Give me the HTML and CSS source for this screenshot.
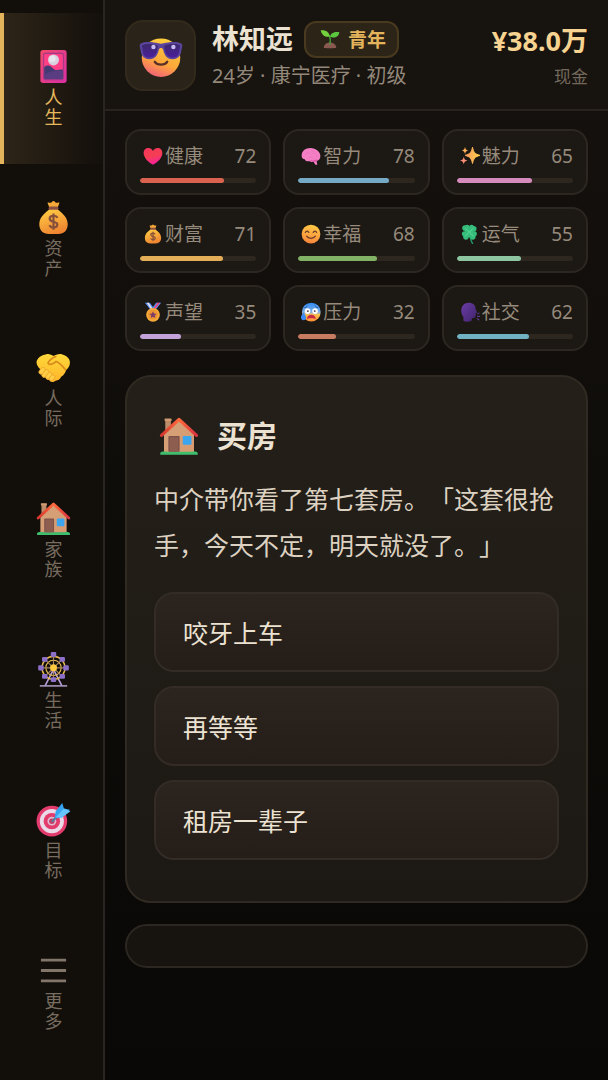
FILE: index.html
```html
<!DOCTYPE html>
<html lang="zh-CN">
<head>
  <meta charset="UTF-8">
  <meta name="viewport" content="width=device-width, initial-scale=1.0">
  <title>人生</title>
  <link rel="stylesheet" href="styles.css">
</head>
<body>
  <svg class="sprite" width="0" height="0" aria-hidden="true">
    <defs>
      <linearGradient id="gFace" x1="0.7" y1="0" x2="0.3" y2="1">
        <stop offset="0" stop-color="#ffd23e"/>
        <stop offset="0.6" stop-color="#ffa83a"/>
        <stop offset="1" stop-color="#f0607a"/>
      </linearGradient>
      <linearGradient id="gSmile" x1="0.6" y1="0" x2="0.4" y2="1">
        <stop offset="0" stop-color="#ffcb45"/>
        <stop offset="1" stop-color="#f8863c"/>
      </linearGradient>
      <linearGradient id="gBag" x1="0.2" y1="0" x2="0.6" y2="1">
        <stop offset="0" stop-color="#ffcf45"/>
        <stop offset="1" stop-color="#ee8230"/>
      </linearGradient>
      <linearGradient id="gHand" x1="0" y1="0" x2="0" y2="1">
        <stop offset="0" stop-color="#ffd83a"/>
        <stop offset="1" stop-color="#ffb52a"/>
      </linearGradient>
      <linearGradient id="gWall" x1="0" y1="0" x2="1" y2="1">
        <stop offset="0" stop-color="#d3a27a"/>
        <stop offset="1" stop-color="#d99a70"/>
      </linearGradient>
      <linearGradient id="gRoof" x1="0" y1="0" x2="1" y2="0">
        <stop offset="0" stop-color="#d5352f"/>
        <stop offset="0.5" stop-color="#ff6a3c"/>
        <stop offset="1" stop-color="#d83440"/>
      </linearGradient>
      <linearGradient id="gCard" x1="0" y1="0" x2="1" y2="1">
        <stop offset="0" stop-color="#f04a6c"/>
        <stop offset="1" stop-color="#d92fa4"/>
      </linearGradient>
      <linearGradient id="gLens" x1="0" y1="0" x2="0" y2="1">
        <stop offset="0" stop-color="#3c2a6c"/>
        <stop offset="1" stop-color="#4b1f9a"/>
      </linearGradient>
      <linearGradient id="gHeart" x1="0.2" y1="0" x2="0.5" y2="1">
        <stop offset="0" stop-color="#f8355c"/>
        <stop offset="0.5" stop-color="#f43f52"/>
        <stop offset="1" stop-color="#fb1fa0"/>
      </linearGradient>
      <linearGradient id="gSpark" x1="0" y1="0" x2="1" y2="0">
        <stop offset="0" stop-color="#ff9a5c"/>
        <stop offset="1" stop-color="#ffd04e"/>
      </linearGradient>
      <linearGradient id="gHead" x1="0" y1="0" x2="1" y2="1">
        <stop offset="0" stop-color="#6a3da6"/>
        <stop offset="1" stop-color="#40236b"/>
      </linearGradient>
      <linearGradient id="gSweat" x1="0" y1="0" x2="0" y2="1">
        <stop offset="0" stop-color="#2f8bf5"/>
        <stop offset="0.5" stop-color="#7fb0e8"/>
        <stop offset="0.65" stop-color="#ffc04a"/>
        <stop offset="1" stop-color="#ff9038"/>
      </linearGradient>
    </defs>

    <symbol id="i-life" viewBox="0 0 32 32">
      <rect x="4" y="1" width="24" height="30" rx="2.5" fill="url(#gCard)"/>
      <rect x="7" y="4" width="18" height="24" rx="1.5" fill="#ff3f86" stroke="#a03a86" stroke-width="1"/>
      <path d="M7.500 16.500c2.500-2 5-1.500 6.500 0 2 2 3.500 3 5 2.800 2-.3 4-.8 5.500-.3V26a1.500 1.500 0 0 1-1.500 1.500H9A1.500 1.500 0 0 1 7.500 26z" fill="#433a73"/>
      <path d="M7.500 24c5-4 11-5 17-4v6a1.500 1.500 0 0 1-1.500 1.500H9A1.500 1.500 0 0 1 7.500 26z" fill="#593c82"/>
      <circle cx="16" cy="10" r="5" fill="#d9d3df"/>
      <circle cx="15" cy="9" r="3" fill="#e9e5ec"/>
    </symbol>

    <symbol id="i-money" viewBox="0 0 32 32">
      <path d="M12 6.500 10.500 2.500c1-.8 2 .4 3 0 1-.3 1.300-1.700 2.500-1.700s1.500 1.400 2.500 1.700c1 .4 2-.8 3 0L20 6.500z" fill="#f5a838"/>
      <path d="M12.500 8h7c1 2 9.500 6 9.500 14 0 6-3.500 9-8.500 9h-9C6.500 31 3 28 3 22 3 14 11.500 10 12.500 8z" fill="url(#gBag)"/>
      <rect x="11.500" y="6" width="9" height="3" rx="1.500" fill="#8a5142"/>
      <path d="M19.500 16.300c-.5-1.200-1.800-1.900-3.500-1.900-2 0-3.500 1-3.500 2.700 0 3.800 7 1.800 7 5.400 0 1.700-1.500 2.700-3.500 2.700-1.700 0-3.200-.8-3.700-2.200M16 12.300v15" fill="none" stroke="#87503a" stroke-width="2"/>
    </symbol>

    <symbol id="i-hands" viewBox="0 -2.500 32 32">
      <path d="M9 1.500c3-1 5 .5 7 1.500 2-1 5-2.500 8-1.500 4 1 7.500 4 7 8-.3 3-1.800 4.500-3.500 6.500-1 3-2.500 5-4.500 6-1 2.500-3 3.500-5 3.500-2.500 2-5 1.500-6-.5-2 0-3-1-3.500-2.500-2 0-3-1.500-2.500-3-2-.5-2.500-2.500-1.500-4C1.500 13 .2 10.500.5 8 1.500 4.500 5 2 9 1.500z" fill="url(#gHand)"/>
      <path d="M18 3.500c-4 2-6.500 3.500-7 6 1 2 5 1 7.500-1.500 3 1 6 4.500 8.500 7.500" fill="none" stroke="#d98a1c" stroke-width="1.600" stroke-linecap="round"/>
      <g fill="#ffcc45" stroke="#e8a027" stroke-width=".6">
        <rect x="3.500" y="13" width="4" height="7" rx="2" transform="rotate(38 5.500 16.500)"/>
        <rect x="6.500" y="15" width="4" height="8" rx="2" transform="rotate(38 8.500 19)"/>
        <rect x="9.700" y="17.500" width="4" height="7" rx="2" transform="rotate(38 11.700 21)"/>
        <rect x="12.800" y="20" width="3.800" height="6" rx="1.900" transform="rotate(38 14.700 23)"/>
      </g>
    </symbol>

    <symbol id="i-house" viewBox="0 0 32 32">
      <rect x="5" y="2.500" width="4.500" height="12" fill="#bd8c68"/>
      <rect x="4.500" y="2" width="5.500" height="2" rx=".5" fill="#d09b70"/>
      <path d="M4 14 16 3l12 11v15H4z" fill="url(#gWall)"/>
      <path d="M1 29.500C2 28 4 28.500 6 28.500h20c2 0 4-.5 5 1V31H1z" fill="#3fbf6e"/>
      <rect x="7.500" y="16" width="9" height="12.500" rx=".8" fill="#7d5148"/>
      <rect x="8.500" y="17" width="7" height="11.500" fill="#8d5d50"/>
      <rect x="19" y="16" width="7" height="7" rx=".8" fill="#3ba6ee"/>
      <path d="M2 15.500 16 2.800l14 12.700" fill="none" stroke="url(#gRoof)" stroke-width="2.600" stroke-linejoin="round" stroke-linecap="round"/>
    </symbol>

    <symbol id="i-wheel" viewBox="0 0 32 32">
      <path d="M16 16 8.500 30.500M16 16l7.500 14.500" stroke="#b59bd8" stroke-width="1.500"/>
      <path d="M3.500 31h25" stroke="#bba9d5" stroke-width="1.300"/>
      <g fill="none" stroke="#e9bd4e">
        <circle cx="16" cy="14.500" r="10.500" stroke-width="1.400"/>
        <circle cx="16" cy="14.500" r="7" stroke-width="1"/>
      </g>
      <path d="M16 4v21M5.500 14.500h21M8.600 7.100l14.800 14.800M23.400 7.100 8.600 21.900" stroke="#a98662" stroke-width="1"/>
      <g fill="#8c6fc6">
        <rect x="13.500" y="0" width="5" height="4.500" rx="1"/>
        <rect x="13.500" y="23" width="5" height="4.500" rx="1"/>
        <rect x="2" y="12" width="5" height="5" rx="1"/>
        <rect x="25" y="12" width="5" height="5" rx="1"/>
        <rect x="5.500" y="4.500" width="5" height="4.500" rx="1"/>
        <rect x="21.500" y="4.500" width="5" height="4.500" rx="1"/>
        <rect x="5.500" y="20" width="5" height="4.500" rx="1"/>
        <rect x="21.500" y="20" width="5" height="4.500" rx="1"/>
      </g>
      <circle cx="16" cy="14.500" r="3.200" fill="#ffca40"/>
    </symbol>

    <symbol id="i-target" viewBox="0 0 32 32">
      <circle cx="14.500" cy="17.500" r="14" fill="#e23b6c"/>
      <circle cx="14.500" cy="17.500" r="11" fill="#ead9e6"/>
      <circle cx="14.500" cy="17.500" r="7.500" fill="#e23b6c"/>
      <circle cx="14.500" cy="17.500" r="4" fill="#ddbccf"/>
      <circle cx="14.500" cy="17.500" r="2.500" fill="#c83a68"/>
      <path d="m15 17.500 8-8" stroke="#5b7896" stroke-width="2" stroke-linecap="round"/>
      <path d="m17 15 1-6.500 6-7.500 1.500 5 5.500 1-7 7z" fill="#35a4f0"/>
      <path d="m18 14 7.500-8 6 2.500-8 6z" fill="#67c3fb"/>
    </symbol>

    <symbol id="i-cool" viewBox="0 0 32 32">
      <circle cx="16" cy="17.200" r="14" fill="url(#gFace)"/>
      <g transform="translate(0 1.300)">
        <path d="M.5 7.500C.3 6 1.500 5 3 4.800c4-.7 8-.3 11 .7 1.300.4 2.700.4 4 0 3-1 7-1.400 11-.7 1.500.2 2.700 1.200 2.500 2.700l-.9 4.500c-.6 3-2.800 5-6.100 5-4.500 0-6-3-7-7-.5-1.500-2.500-1.500-3 0-1 4-2.500 7-7 7-3.300 0-5.500-2-6.100-5z" fill="#5a449c"/>
        <path d="M2 7c3-1.500 8.500-1.200 11.700.2-.4 5.500-2 8.500-6.200 8.500-3 0-4.200-1.500-4.600-4zM30 7c-3-1.500-8.500-1.200-11.700.2.400 5.500 2 8.500 6.200 8.500 3 0 4.200-1.500 4.600-4z" fill="url(#gLens)"/>
        <circle cx="10.500" cy="8.200" r="1.600" fill="#c7bcf2"/>
        <circle cx="25" cy="8.200" r="1.600" fill="#c7bcf2"/>
      </g>
      <path d="M11.500 20.200c1.800 2.700 7.200 2.700 9 0" fill="none" stroke="#583027" stroke-width="1.700" stroke-linecap="round"/>
    </symbol>

    <symbol id="i-sprout" viewBox="0 0 32 32">
      <path d="M6 30c0-5 4.500-8.500 10-8.500S26 25 26 30c0 1-20 1-20 0z" fill="#8a5a50"/>
      <path d="M16 24c1-5 1-9-1-13" fill="none" stroke="#3f9e3a" stroke-width="2.500" stroke-linecap="round"/>
      <path d="M15.500 12C10 14 3 11 1 2c7-1 14 2 14.500 10z" fill="#74d23e"/>
      <path d="M16 12.500C17 6 23 4 31 5c-1 7-8 11-15 7.500z" fill="#5cc840"/>
    </symbol>

    <symbol id="i-heart" viewBox="0 0 32 32">
      <path d="M16 30C9 26 1 19 1 11c0-5 3.500-8 7.500-8 3.300 0 6 1.800 7.500 5 1.500-3.200 4.200-5 7.500-5C27.500 3 31 6 31 11c0 8-8 15-15 19z" fill="url(#gHeart)"/>
    </symbol>

    <symbol id="i-brain" viewBox="0 0 32 32">
      <path d="M1 15C1 8 7 3 15 3c9 0 16 6 16 13 0 4-2 7-6 8l1 6h-3l-3-5c-2 1-5 1-7-1-3 1-6 0-7-3-3 0-5-2-5-6z" fill="#f47fc5"/>
      <path d="M7 14c2-4 5-4 7-2m3-5c3 0 4 3 3 5m-9 7c2-2 6-2 8 1m4-8c3 1 3 4 2 6" fill="none" stroke="#ea70b8" stroke-width="1.200" stroke-linecap="round"/>
      <path d="M14 22c3 2 8 1 11-1v3c-3 2-9 2-11-2z" fill="#d74ba4"/>
    </symbol>

    <symbol id="i-spark" viewBox="0 0 32 32">
      <path d="M20 2c2 8.500 3.500 10.500 12 13-8.500 2.500-10 4.500-12 13-2-8.500-3.500-10.500-12-13 8.500-2.500 10-4.500 12-13z" fill="url(#gSpark)" stroke="url(#gSpark)" stroke-width="1.500" stroke-linejoin="round"/>
      <path d="M8 1c.6 4 1.500 5 5 6-3.500 1-4.400 2-5 6-.6-4-1.500-5-5-6 3.500-1 4.400-2 5-6z" fill="#ffb057"/>
      <path d="M6 17c.8 4 2 5.200 6 6-4 .8-5.200 2-6 6-.8-4-2-5.200-6-6 4-.8 5.200-2 6-6z" fill="#ff9077"/>
    </symbol>

    <symbol id="i-smile" viewBox="0 0 32 32">
      <circle cx="16" cy="16" r="15" fill="url(#gSmile)"/>
      <path d="M7 13.500c1-3 4.500-3 5.500 0M19.500 13.500c1-3 4.500-3 5.500 0M9 19.500c3 4.500 11 4.500 14 0" fill="none" stroke="#6b3a2a" stroke-width="2" stroke-linecap="round"/>
    </symbol>

    <symbol id="i-clover" viewBox="0 0 32 32">
      <path d="M15 14c1 7 2 12 5 17" fill="none" stroke="#239461" stroke-width="2.500" stroke-linecap="round"/>
      <g fill="#36bd7b">
        <circle cx="8" cy="6.500" r="4.500"/>
        <circle cx="11.500" cy="5" r="4"/>
        <circle cx="18.500" cy="5" r="4"/>
        <circle cx="22" cy="7.500" r="4.500"/>
        <circle cx="7" cy="15.500" r="4"/>
        <circle cx="9.500" cy="20.500" r="4.500"/>
        <circle cx="23" cy="15.500" r="4"/>
        <circle cx="20.500" cy="20.500" r="4.500"/>
        <rect x="8" y="6" width="14" height="15" rx="3"/>
      </g>
      <path d="M9 7l12 12M21 7 9 19" stroke="#5fdb9c" stroke-width="1.500" stroke-linecap="round"/>
    </symbol>

    <symbol id="i-medal" viewBox="0 0 32 32">
      <path d="M3 1h8l8 11-5 3z" fill="#4f8df0"/>
      <path d="M6 1h3l8 12h-3z" fill="#f3e6ee"/>
      <path d="M29 1h-8l-8 11 5 3z" fill="#5a8df0"/>
      <path d="M27 1h-4l-8 12h3z" fill="#e8497c"/>
      <circle cx="16" cy="20.500" r="11" fill="#f6a93b"/>
      <circle cx="16" cy="20.500" r="8" fill="#eb9633"/>
      <path d="m16 15 1.700 3.500 3.900.5-2.800 2.700.7 3.900-3.500-1.900-3.500 1.900.7-3.900-2.800-2.700 3.900-.5z" fill="#7d3b66"/>
    </symbol>

    <symbol id="i-stress" viewBox="0 0 32 32">
      <circle cx="16.500" cy="16" r="15" fill="url(#gSweat)"/>
      <circle cx="10.500" cy="14.500" r="4.500" fill="#fff"/>
      <circle cx="22.500" cy="14.500" r="4.500" fill="#fff"/>
      <circle cx="11" cy="14.500" r="1.500" fill="#46304b"/>
      <circle cx="22" cy="14.500" r="1.500" fill="#46304b"/>
      <path d="M6 9c2 0 3-1 4-2.500M27 9c-2 0-3-1-4-2.500" stroke="#2b4f93" stroke-width="1.500" fill="none" stroke-linecap="round"/>
      <path d="M9.500 27c0-9 14-9 14 0-2-1.500-12-1.500-14 0z" fill="#c92846"/>
      <path d="M4 16c2 4 4 6 4 9 0 3-2 4-4 4s-4-1.500-4-4c0-3 2-5 4-9z" fill="#3d8bf5"/>
    </symbol>

    <symbol id="i-talk" viewBox="0 0 32 32">
      <path d="M2 14C2 6 7 1 14 1c7 0 11 4 11 10l2 5c.4 1-.2 1.500-1.500 1.700L25 22c-.3 3-2 4-6 4l-.5 4c-4 2-10 2-13 0V24c-2-2-3.500-6-3.500-10z" fill="url(#gHead)"/>
      <path d="m28 19 2.500-1.500M28 23h3.500M27.500 26.500l2.500 2" stroke="#5d388c" stroke-width="1.800" stroke-linecap="round"/>
    </symbol>

    <symbol id="i-more" viewBox="0 0 32 32">
      <path d="M4.500 6.500h23M4.500 16h23M4.500 25.500h23" stroke="#82766a" stroke-width="2.600"/>
    </symbol>
  </svg>

  <nav class="sidebar">
    <button type="button" class="tab active"><svg class="tab-icon"><use href="#i-life"/></svg><span class="tab-label">人生</span></button>
    <button type="button" class="tab"><svg class="tab-icon"><use href="#i-money"/></svg><span class="tab-label">资产</span></button>
    <button type="button" class="tab"><svg class="tab-icon"><use href="#i-hands"/></svg><span class="tab-label">人际</span></button>
    <button type="button" class="tab"><svg class="tab-icon"><use href="#i-house"/></svg><span class="tab-label">家族</span></button>
    <button type="button" class="tab"><svg class="tab-icon"><use href="#i-wheel"/></svg><span class="tab-label">生活</span></button>
    <button type="button" class="tab"><svg class="tab-icon"><use href="#i-target"/></svg><span class="tab-label">目标</span></button>
    <button type="button" class="tab"><svg class="tab-icon"><use href="#i-more"/></svg><span class="tab-label">更多</span></button>
  </nav>

  <main class="main">
    <header class="header">
      <div class="avatar"><svg class="avatar-icon"><use href="#i-cool"/></svg></div>
      <div class="profile">
        <div class="name-row">
          <h1 class="name">林知远</h1>
          <span class="stage"><svg class="stage-icon"><use href="#i-sprout"/></svg>青年</span>
        </div>
        <div class="info">24岁 · 康宁医疗 · 初级</div>
      </div>
      <div class="cash">
        <div class="cash-value">¥38.0万</div>
        <div class="cash-label">现金</div>
      </div>
    </header>

    <section class="stats">
      <div class="stat health">
        <div class="stat-head"><svg class="stat-icon"><use href="#i-heart"/></svg><span>健康</span><span class="stat-value">72</span></div>
        <div class="bar"><div class="fill" style="width: 72%"></div></div>
      </div>
      <div class="stat mind">
        <div class="stat-head"><svg class="stat-icon"><use href="#i-brain"/></svg><span>智力</span><span class="stat-value">78</span></div>
        <div class="bar"><div class="fill" style="width: 78%"></div></div>
      </div>
      <div class="stat charm">
        <div class="stat-head"><svg class="stat-icon"><use href="#i-spark"/></svg><span>魅力</span><span class="stat-value">65</span></div>
        <div class="bar"><div class="fill" style="width: 65%"></div></div>
      </div>
      <div class="stat wealth">
        <div class="stat-head"><svg class="stat-icon"><use href="#i-money"/></svg><span>财富</span><span class="stat-value">71</span></div>
        <div class="bar"><div class="fill" style="width: 71%"></div></div>
      </div>
      <div class="stat happy">
        <div class="stat-head"><svg class="stat-icon"><use href="#i-smile"/></svg><span>幸福</span><span class="stat-value">68</span></div>
        <div class="bar"><div class="fill" style="width: 68%"></div></div>
      </div>
      <div class="stat luck">
        <div class="stat-head"><svg class="stat-icon"><use href="#i-clover"/></svg><span>运气</span><span class="stat-value">55</span></div>
        <div class="bar"><div class="fill" style="width: 55%"></div></div>
      </div>
      <div class="stat fame">
        <div class="stat-head"><svg class="stat-icon"><use href="#i-medal"/></svg><span>声望</span><span class="stat-value">35</span></div>
        <div class="bar"><div class="fill" style="width: 35%"></div></div>
      </div>
      <div class="stat stress">
        <div class="stat-head"><svg class="stat-icon"><use href="#i-stress"/></svg><span>压力</span><span class="stat-value">32</span></div>
        <div class="bar"><div class="fill" style="width: 32%"></div></div>
      </div>
      <div class="stat social">
        <div class="stat-head"><svg class="stat-icon"><use href="#i-talk"/></svg><span>社交</span><span class="stat-value">62</span></div>
        <div class="bar"><div class="fill" style="width: 62%"></div></div>
      </div>
    </section>

    <section class="event">
      <div class="event-head">
        <svg class="event-icon"><use href="#i-house"/></svg>
        <h2 class="event-title">买房</h2>
      </div>
      <p class="event-text">中介带你看了第七套房。「这套很抢手，今天不定，明天就没了。」</p>
      <div class="choices">
        <button type="button" class="choice">咬牙上车</button>
        <button type="button" class="choice">再等等</button>
        <button type="button" class="choice">租房一辈子</button>
      </div>
    </section>

    <div class="log"></div>
  </main>
</body>
</html>
```

FILE: styles.css
```css
* {
  box-sizing: border-box;
}

body {
  margin: 0;
  display: flex;
  min-height: 100vh;
  font-family: "Noto Sans", "Noto Sans CJK SC", sans-serif;
  color: #ece2d2;
  background: linear-gradient(180deg, #16120e 0%, #0e0c09 50%, #090806 100%);
}

button {
  font-family: inherit;
  color: inherit;
  cursor: pointer;
}

.sprite {
  position: absolute;
}

/* 左侧竖排导航 */
.sidebar {
  flex: 0 0 105px;
  display: flex;
  flex-direction: column;
  padding: 13px 0;
  background: #120f0b;
  border-right: 2px solid #2a2520;
}

.tab {
  flex: 1;
  display: flex;
  flex-direction: column;
  align-items: center;
  justify-content: center;
  gap: 3px;
  padding: 0;
  border: none;
  border-left: 4px solid transparent;
  background: none;
  color: #776c5f;
}

.tab.active {
  color: #e6b85c;
  border-left-color: #e3b45c;
  background: linear-gradient(90deg, #2e2518, #130f0b);
}

.tab-icon {
  width: 35px;
  height: 35px;
}

.tab-label {
  width: 18px;
  font-size: 18px;
  line-height: 20px;
  word-break: break-all;
}

.main {
  flex: 1;
  min-width: 0;
}

.header {
  display: flex;
  align-items: flex-start;
  gap: 16px;
  padding: 20px 20px 15px;
  background: #17130f;
  border-bottom: 2px solid #28231d;
}

.avatar {
  flex: 0 0 71px;
  height: 71px;
  display: flex;
  align-items: center;
  justify-content: center;
  border: 2px solid #322a1c;
  border-radius: 18px;
  background: #292319;
}

.avatar-icon {
  width: 44px;
  height: 44px;
}

.profile {
  flex: 1;
}

.name-row {
  display: flex;
  align-items: center;
  gap: 11px;
}

.name {
  margin: 0;
  font-size: 27px;
  line-height: 38px;
}

.stage {
  display: flex;
  align-items: center;
  gap: 8px;
  height: 37px;
  padding: 0 11px 0 14px;
  font-size: 19px;
  font-weight: bold;
  color: #e3b45c;
  background: #2b2417;
  border: 2px solid #48391f;
  border-radius: 12px;
}

.stage-icon {
  width: 20px;
  height: 20px;
}

.info {
  font-size: 20px;
  line-height: 36px;
  color: #93887a;
}

.cash {
  text-align: right;
}

.cash-value {
  font-size: 27px;
  font-weight: bold;
  line-height: 42px;
  color: #f6d390;
}

.cash-label {
  font-size: 17px;
  line-height: 30px;
  color: #72685c;
}

.stats {
  display: grid;
  grid-template-columns: repeat(3, 1fr);
  gap: 12px;
  margin: 18px 20px 24px;
}

.stat {
  padding: 12px 13px 10px;
  border: 2px solid #2c2721;
  border-radius: 16px;
  background: #1c1813;
}

.stat-head {
  display: flex;
  align-items: center;
  margin-bottom: 9px;
  font-size: 19px;
  line-height: 26px;
  color: #958a7c;
}

.stat-icon {
  width: 20px;
  height: 20px;
  margin: 0 2px 0 3px;
}

.stat-value {
  margin-left: auto;
}

.bar {
  height: 5px;
  border-radius: 3px;
  background: #2d271f;
  overflow: hidden;
}

.fill {
  height: 100%;
  border-radius: 3px;
}

.health .fill { background: #d9634f; }
.mind .fill { background: #75a9c6; }
.charm .fill { background: #d68bbd; }
.wealth .fill { background: #e3ae57; }
.happy .fill { background: #82b266; }
.luck .fill { background: #8dc5a0; }
.fame .fill { background: #c2a1d8; }
.stress .fill { background: #c77b60; }
.social .fill { background: #70b2c2; }

.event {
  margin: 0 20px 21px;
  padding: 31px 27px 41px;
  border: 2px solid #302a22;
  border-radius: 26px;
  background: linear-gradient(180deg, #241f19, #1c1914);
}

.event-head {
  display: flex;
  align-items: center;
  gap: 18px;
  padding-left: 5px;
  margin-bottom: 12px;
}

.event-icon {
  width: 40px;
  height: 40px;
}

.event-title {
  margin: 0;
  font-size: 30px;
  line-height: 56px;
}

.event-text {
  margin: 0 0 24px;
  font-size: 25px;
  line-height: 46px;
  color: #ddd2c2;
  text-spacing-trim: space-all;
}

.choices {
  display: flex;
  flex-direction: column;
  gap: 14px;
}

.choice {
  height: 80px;
  padding: 0 27px;
  font-size: 25px;
  text-align: left;
  color: #ece2d2;
  border: 2px solid #332b25;
  border-radius: 20px;
  background: linear-gradient(180deg, #2c241e, #251d18);
}

.log {
  height: 44px;
  margin: 0 20px;
  border: 2px solid #2c2721;
  border-radius: 22px;
  background: #17140f;
}
```
